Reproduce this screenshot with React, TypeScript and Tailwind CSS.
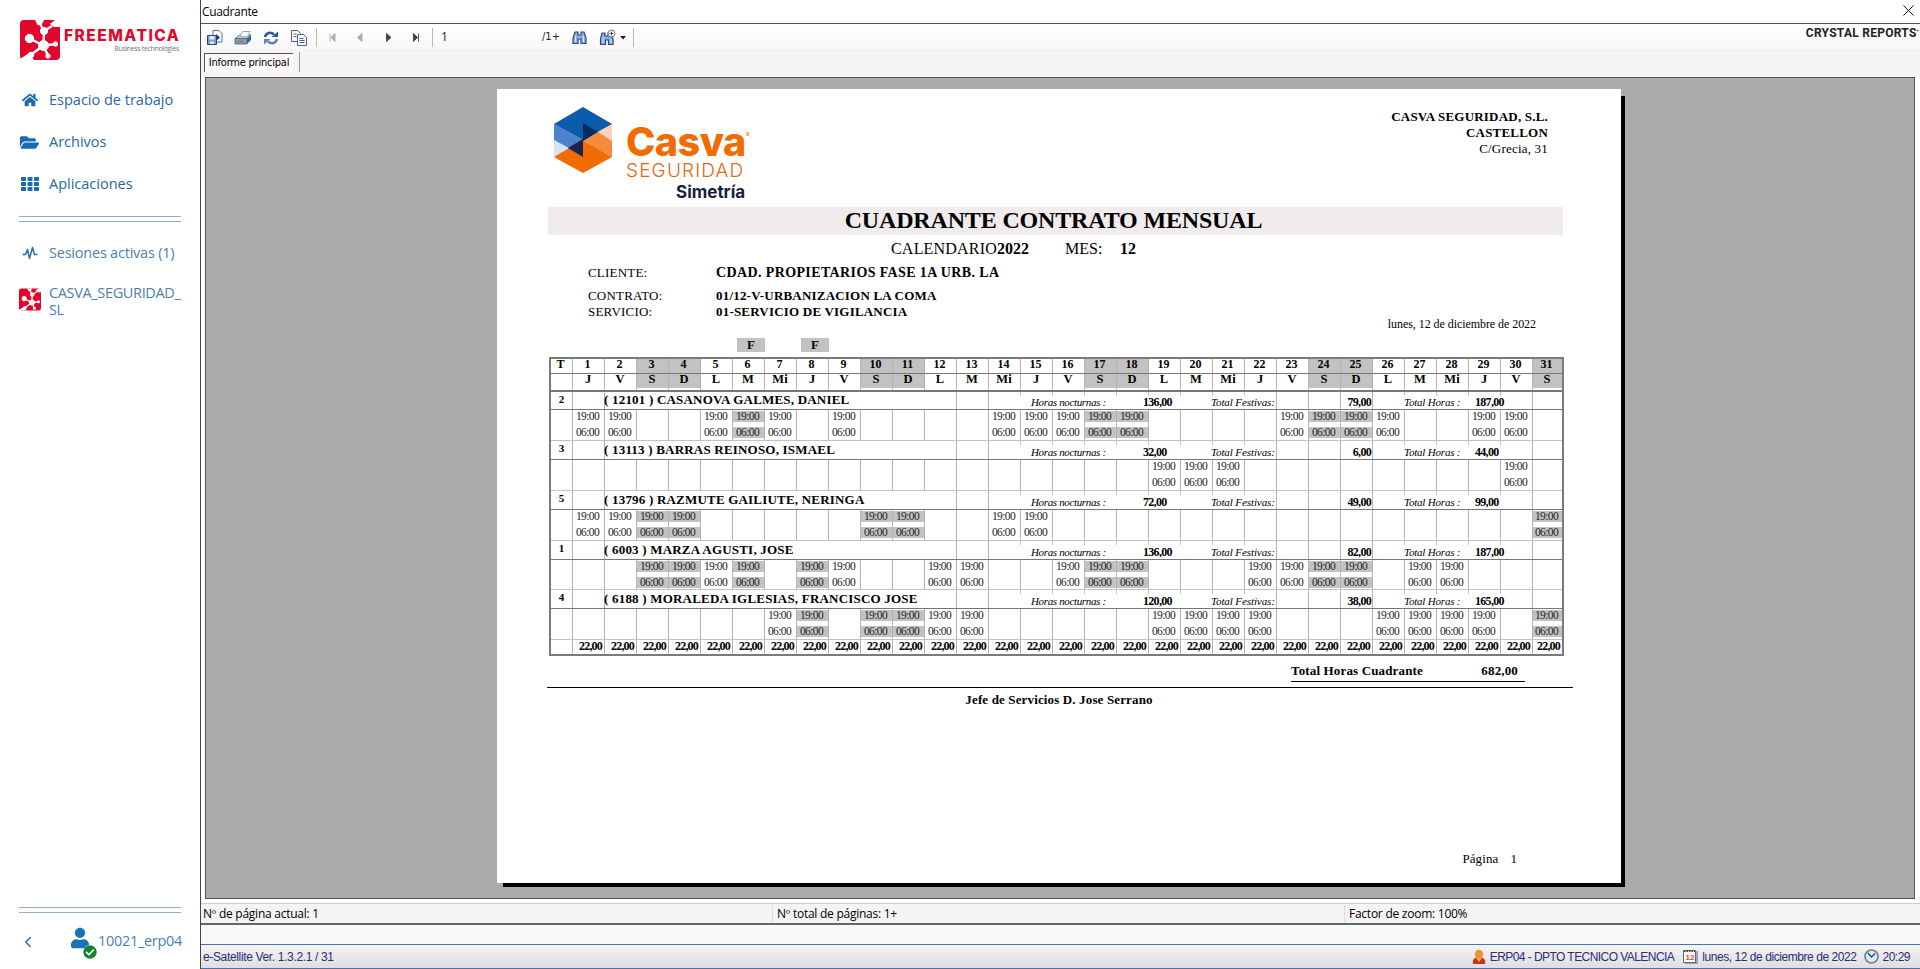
import React from "react";
import { FaHome, FaFolderOpen, FaUser, FaCheckCircle } from "react-icons/fa";
import { ChevronLeft } from "lucide-react";

const DAYS: string[] = ["J", "V", "S", "D", "L", "M", "Mi"];
const dayName = (d: number) => DAYS[(d - 1) % 7];
const WEEKEND = [3, 4, 10, 11, 17, 18, 24, 25, 31];
const HOLIDAYS = [6, 8];
const MONTH = Array.from({ length: 31 }, (_, i) => i + 1);
const isShaded = (d: number) => WEEKEND.includes(d) || HOLIDAYS.includes(d);

type Worker = {
  turn: string;
  name: string;
  night: string;
  festive: string;
  total: string;
  days: number[];
  head: string;
  body: string;
};

const WORKERS: Worker[] = [
  { turn: "2", name: "( 12101 ) CASANOVA GALMES, DANIEL", night: "136,00", festive: "79,00", total: "187,00", days: [1, 2, 5, 6, 7, 9, 14, 15, 16, 17, 18, 23, 24, 25, 26, 29, 30], head: "h-[18px]", body: "h-[31px]" },
  { turn: "3", name: "( 13113 ) BARRAS REINOSO, ISMAEL", night: "32,00", festive: "6,00", total: "44,00", days: [19, 20, 21, 30], head: "h-[19px]", body: "h-[31px]" },
  { turn: "5", name: "( 13796 ) RAZMUTE GAILIUTE, NERINGA", night: "72,00", festive: "49,00", total: "99,00", days: [1, 2, 3, 4, 10, 11, 14, 15, 31], head: "h-[19px]", body: "h-[31px]" },
  { turn: "1", name: "( 6003 ) MARZA AGUSTI, JOSE", night: "136,00", festive: "82,00", total: "187,00", days: [3, 4, 5, 6, 8, 9, 12, 13, 16, 17, 18, 22, 23, 24, 25, 27, 28], head: "h-[19px]", body: "h-[30px]" },
  { turn: "4", name: "( 6188 ) MORALEDA IGLESIAS, FRANCISCO JOSE", night: "120,00", festive: "38,00", total: "165,00", days: [7, 8, 10, 11, 12, 13, 19, 20, 21, 22, 26, 27, 28, 29, 31], head: "h-[19px]", body: "h-[31px]" },
];

const GRID = "grid grid-cols-[21px_repeat(30,32px)_30px]";

function FreematicaMark({ className }: { className: string }) {
  return (
    <svg viewBox="0 0 40 40" className={className}>
      <rect width="40" height="40" rx="4" fill="#e2062c" />
      <g fill="#fff" stroke="#fff">
        <circle cx="9.500" cy="18.500" r="4.200" />
        <circle cx="24" cy="11" r="3.600" />
        <circle cx="23.500" cy="25.500" r="5" />
        <circle cx="11" cy="35" r="2.800" />
        <circle cx="35.500" cy="24" r="2.200" />
        <circle cx="28" cy="36" r="2.200" />
        <path d="M9.500 18.500L23.500 25.500L24 11L19 2M24 11L32 6M23.500 25.500L12 34M23.500 25.500L37 24M23.500 25.500L28 36" strokeWidth="2.400" fill="none" />
        <path d="M15 0h9l-2.500 5h-4zM30 4l5-4h5v7h-6zM0 39l9-6 5 7H0z" strokeWidth="0" />
      </g>
    </svg>
  );
}

function AppsGrid() {
  return (
    <svg viewBox="0 0 18 14" className="h-[14px] w-[18px]" fill="#1a6cb0">
      {[0, 5, 10].map((y) => [0, 6.5, 13].map((x) => <rect key={`${x}-${y}`} x={x} y={y} width="5" height="4" rx="0.8" />))}
    </svg>
  );
}

function Sidebar() {
  return (
    <aside className="flex w-[200px] shrink-0 flex-col bg-white font-['Open_Sans',sans-serif] text-[#2768a4]">
      <div className="flex h-[60px] items-start pt-[20px] pl-[20px]">
        <FreematicaMark className="h-[40px] w-[40px]" />
        <div className="ml-[4px] flex w-[116px] flex-col pt-[8px] font-['Inter',sans-serif]">
          <span className="text-[15.5px] leading-[15px] font-extrabold tracking-[1.5px] text-[#e2062c]">FREEMATICA</span>
          <span className="mr-px self-end font-['Open_Sans',sans-serif] text-[7px] leading-[11px] tracking-[-0.35px] text-[#777]">Business technologies</span>
        </div>
      </div>
      <nav className="mt-[19px] flex flex-col text-[14.5px]">
        <div className="flex h-[42px] items-center gap-[11px] pl-[22px]"><FaHome className="h-[16px] w-[16px] text-[#1a6cb0]" /><span>Espacio de trabajo</span></div>
        <div className="flex h-[42px] items-center gap-[10px] pl-[20px]"><FaFolderOpen className="h-[19px] w-[19px] text-[#1a6cb0]" /><span>Archivos</span></div>
        <div className="flex h-[42px] items-center gap-[10px] pl-[21px]"><AppsGrid /><span>Aplicaciones</span></div>
      </nav>
      <div className="mt-[11px] ml-[19px] h-[6px] w-[162px] border-y border-[#8fb0c4]" />
      <div className="mt-[20px] flex h-[22px] items-center gap-[11px] pl-[22px] text-[14.5px] text-[#4b7fb0]">
        <svg viewBox="0 0 16 16" className="h-[16px] w-[16px]" fill="none" stroke="#2a70ad" strokeWidth="1.500" strokeLinejoin="round">
          <path d="M0.500 9.500h3l2-5 2 9 3-11 2 7h3" />
        </svg>
        <span className="tracking-[-0.22px]">Sesiones activas (1)</span>
      </div>
      <div className="mt-[20px] flex gap-[8px] pl-[19px] text-[#4b7fb0]">
        <FreematicaMark className="mt-[4px] h-[23px] w-[22px]" />
        <span className="text-[14.5px] leading-[17px] tracking-[-0.35px]">CASVA_SEGURIDAD_<br />SL</span>
      </div>
      <div className="mt-auto ml-[19px] h-[6px] w-[162px] border-y border-[#8fb0c4]" />
      <div className="mb-[8px] flex h-[48px] items-end pb-[6px] pl-[19px]">
        <ChevronLeft className="mb-[4px] h-[18px] w-[18px] text-[#2a70ad]" />
        <span className="relative ml-[34px] block h-[28px] w-[26px]">
          <FaUser className="h-[22px] w-[18px] text-[#1a73b8]" />
          <FaCheckCircle className="absolute right-0 bottom-[-4px] h-[14px] w-[14px] rounded-full bg-white text-[#12862c]" />
        </span>
        <span className="mb-[3px] ml-px text-[14.5px] tracking-[-0.3px] text-[#4b7fb0]">10021_erp04</span>
      </div>
    </aside>
  );
}

function Toolbar() {
  return (
    <div className="flex h-[25px] items-center bg-gradient-to-b from-white to-[#f9f7f8] pt-[2px] font-['Open_Sans',sans-serif] text-[12px] text-[#222]">
      <svg width="18" height="18" viewBox="0 0 18 18" className="ml-[5px]">
        <path d="M7 1.500h6l3 3V13H7z" fill="#fff" stroke="#4f6f9f" />
        <path d="M1.500 6.500h9v9h-9z" fill="#7d9acb" stroke="#2c4776" />
        <path d="M3.500 7h5v3.500h-5zM4 12.500h4V15H4z" fill="#e6edf7" />
        <path d="M10 5l4 3.500-4 3.500z" fill="#1c3e77" />
      </svg>
      <svg width="18" height="18" viewBox="0 0 18 18" className="ml-[10px]">
        <path d="M1 9.500L5.500 6H17l-4 3.500z" fill="#b9d3d6" stroke="#4c6d9a" strokeWidth="0.800" />
        <path d="M6 7l2.500-4.500H16L13 8z" fill="#fff" stroke="#7d96bd" strokeWidth="0.800" />
        <path d="M1 9.500h12V15H1z" fill="#7fa0b8" stroke="#40638f" strokeWidth="0.800" />
        <path d="M13 9.500L17 6v5l-4 4z" fill="#3f6390" />
        <path d="M3 12.500h7" stroke="#e9553d" strokeWidth="1.500" />
      </svg>
      <svg width="18" height="18" viewBox="0 0 18 18" className="ml-[10px]" fill="none">
        <path d="M3 8C4 3.500 9 2.500 12 5.500" stroke="#33559b" strokeWidth="2.600" />
        <path d="M9.500 8H16V2.500z" fill="#33559b" />
        <path d="M15 10C14 14.500 9 15.500 6 12.500" stroke="#5f82bd" strokeWidth="2.600" />
        <path d="M8.500 10H2v5.500z" fill="#5f82bd" />
      </svg>
      <svg width="18" height="18" viewBox="0 0 18 18" className="ml-[10px]" stroke="#446394" fill="#fff">
        <path d="M1.500 1.500h6l3 3v8h-9z" />
        <path d="M7.500 5.500h6l3 3v8h-9z" />
        <path d="M3.500 5h3M3.500 7.500h3M9.500 9.500h4M9.500 11.500h5M9.500 13.500h5" />
      </svg>
      <i className="ml-[8px] h-[19px] w-px bg-[#b8b8b8]" />
      <svg width="96" height="11" viewBox="0 0 96 11" className="ml-[11px]">
        <path d="M2 1.500v8M7 1.500v8L3 5.500zM34 1.500v8L29.500 5.500z" fill="#aaa" stroke="#aaa" strokeWidth="0.900" />
        <path d="M58.500 1.500v8l4.500-4zM85.500 1.500v8l4-4zM90.500 1.500v8" fill="#444" stroke="#444" strokeWidth="0.900" />
      </svg>
      <i className="ml-[8px] h-[19px] w-px bg-[#b8b8b8]" />
      <span className="ml-[8px] w-[101px] -mt-px">1</span>
      <span className="w-[30px] font-['DejaVu_Sans_Condensed','DejaVu_Sans',sans-serif] text-[11px]">/1+</span>
      <svg width="15" height="15" viewBox="0 0 15 15">
        <path d="M3 2h3v3h3V2h3l2 6v5.500H9V9H6v4.500H1V8z" fill="#8faedb" stroke="#234a86" strokeWidth="1.200" />
        <path d="M3.500 6v6M11.500 6v6" stroke="#dbe7f7" />
      </svg>
      <svg width="18" height="17" viewBox="0 0 18 17" className="ml-[12px]">
        <path d="M3 4h3v3h3V4h2l3 6v5.500H9.500V11h-3v4.500H1.500V10z" fill="#8faedb" stroke="#234a86" strokeWidth="1.200" />
        <path d="M4 8v6M12 10v4" stroke="#dbe7f7" />
        <circle cx="12.500" cy="4.500" r="3.500" fill="#fff" stroke="#555" strokeWidth="0.800" />
        <path d="M12.500 2.500v4M10.500 4.500h4" stroke="#345" strokeWidth="0.900" />
      </svg>
      <svg width="6" height="4" viewBox="0 0 6 4" className="ml-[3px]"><path d="M0 0h6L3 3.500z" fill="#222" /></svg>
      <i className="ml-[7px] h-[19px] w-px bg-[#b8b8b8]" />
      <span className="mt-[-9px] mr-px ml-auto font-['Roboto',sans-serif] text-[12px] leading-[14px] font-bold tracking-[0.26px] text-[#222]">CRYSTAL REPORTS<span className="align-[4px] text-[6px] leading-[6px]">•</span></span>
    </div>
  );
}

function CasvaLogo() {
  return (
    <div className="flex h-[105px] pt-[18px] pl-[57px] font-['Inter',sans-serif]">
      <svg width="58" height="66" viewBox="0 0 58 66">
        <path d="M0 17v33l29 16 29-16V17L29 0z" fill="#fbd3b8" />
        <path d="M0 17L29 0l29 17-29 16z" fill="#0b5cab" />
        <path d="M0 17l29 16v2L14 42 0 33z" fill="#4b84cc" />
        <path d="M0 33l15 8L0 50z" fill="#d5e1f5" />
        <path d="M0 50l29-17 29 17-29 16z" fill="#f06c00" />
        <path d="M29 34l15-9 14 9v16z" fill="#f58b3c" />
        <path d="M29 34V16l15 9z" fill="#082a63" />
        <path d="M29 32v18l-15-9z" fill="#1b2450" />
      </svg>
      <div className="ml-[14px] flex w-[132px] flex-col pt-[15px]">
        <div className="flex">
          <span className="text-[39.5px] leading-[40px] font-extrabold tracking-[-0.5px] text-[#f06c00]">Casva</span>
          <span className="mt-[10px] text-[6px] leading-[6px] text-[#f06c00]">®</span>
        </div>
        <span className="text-[19px] leading-[18px] font-light tracking-[1.15px] text-[#e06a14]">SEGURIDAD</span>
        <span className="pl-[50px] text-[17px] leading-[25px] font-bold tracking-[0px] text-[#17203f]">Simetría</span>
      </div>
    </div>
  );
}

function WorkerHeader({ w }: { w: Worker }) {
  return (
    <div className={`grid border-b border-[#777] ${w.head}`}>
      <div className={`[grid-area:1/1] ${GRID}`}>
        <span className="text-center text-[11px] leading-[15px] font-bold">{w.turn}</span>
        {MONTH.map((d) => {
          const underName = d > 2 && d <= 12;
          const short = (d >= 15 && d <= 22) || (d >= 27 && d <= 30);
          return <i key={d} className={underName ? "" : short ? "h-[4px] border-l border-[#c4c4c4]" : "border-l border-[#b4b4b4]"} />;
        })}
      </div>
      <div className="flex items-end pl-[53px] text-[12px] leading-[14px] [grid-area:1/1]">
        <span className="mb-[2px] w-[427px] text-[13px] font-bold tracking-[0.2px] whitespace-pre">{w.name}</span>
        <span className="w-[112px] text-[11px] tracking-[-0.35px] italic">Horas nocturnas :</span>
        <span className="w-[68px] font-bold tracking-[-0.7px]">{w.night}</span>
        <span className="w-[100px] text-[11px] tracking-[-0.1px] italic">Total Festivas:</span>
        <span className="w-[60px] text-right font-bold tracking-[-0.7px]">{w.festive}</span>
        <span className="ml-[33px] w-[71px] text-[11px] tracking-[-0.2px] italic">Total Horas :</span>
        <span className="font-bold tracking-[-0.7px]">{w.total}</span>
      </div>
    </div>
  );
}

function WorkerBody({ w }: { w: Worker }) {
  return (
    <div className={`${GRID} border-b border-[#c2c2c2] ${w.body}`}>
      <span />
      {MONTH.map((d) => {
        const on = w.days.includes(d);
        const bg = on && isShaded(d) ? "bg-[#c3c2c2]" : "";
        return (
          <div key={d} className="flex flex-col gap-[5px] border-l border-[#b4b4b4] pt-px text-center text-[11.5px] tracking-[-0.6px] text-[#222]">
            {on && <span className={`block h-[11px] pr-[2px] leading-[10px] ${bg}`}>19:00</span>}
            {on && <span className={`block h-[11px] pr-[2px] leading-[10px] ${bg}`}>06:00</span>}
          </div>
        );
      })}
    </div>
  );
}

function Schedule() {
  return (
    <div className="ml-[52px] flex w-[1015px] flex-col border-2 border-[#7d7a7c] text-black">
      <div className={`${GRID} h-[15px] border-b border-[#777] text-center text-[12px] leading-[10px] font-bold`}>
        <span className="pr-[2px]">T</span>
        {MONTH.map((d) => <span key={d} className={`border-l border-[#b4b4b4] pr-[2px] ${WEEKEND.includes(d) ? "bg-[#c3c2c2]" : ""}`}>{d}</span>)}
      </div>
      <div className={`${GRID} h-[18px] border-b-2 border-[#777] text-center text-[12.5px] leading-[11px] font-bold`}>
        <span />
        {MONTH.map((d) => (
          <span key={d} className="border-l border-[#b4b4b4]">
            <span className={`block h-[14px] pr-px ${WEEKEND.includes(d) ? "bg-[#c3c2c2]" : ""}`}>{dayName(d)}</span>
          </span>
        ))}
      </div>
      {WORKERS.map((w) => <React.Fragment key={w.turn}><WorkerHeader w={w} /><WorkerBody w={w} /></React.Fragment>)}
      <div className={`${GRID} h-[14px] text-right text-[12px] leading-[12px] font-bold tracking-[-0.8px]`}>
        <span />
        {MONTH.map((d) => <span key={d} className="border-l border-[#b4b4b4] pr-[2px]">22,00</span>)}
      </div>
    </div>
  );
}

function ReportPage() {
  return (
    <div className="mt-[11px] ml-[291px] grid h-[798px] w-[1128px] grid-cols-[1124px_4px] grid-rows-[7px_787px_4px]">
      <article className="col-start-1 row-span-2 row-start-1 flex flex-col bg-white font-['Liberation_Serif',serif] text-black">
        <div className="flex h-[118px] justify-between">
          <CasvaLogo />
          <div className="flex flex-col items-end pt-[20px] pr-[73px] text-[13px] leading-[16px] tracking-[0.2px]">
            <b>CASVA SEGURIDAD, S.L.</b><b>CASTELLON</b><span>C/Grecia, 31</span>
          </div>
        </div>
        <h1 className="ml-[51px] flex h-[28px] w-[1015px] items-center justify-center bg-[#f0ebed] pr-[4px] pb-[3px] text-[24px] font-bold tracking-[-0.16px]">CUADRANTE CONTRATO MENSUAL</h1>
        <div className="flex h-[28px] items-center pl-[394px] text-[16px]">
          <span className="w-[106px] tracking-[0.2px]">CALENDARIO</span><b className="w-[68px]">2022</b><span className="w-[55px]">MES:</span><b>12</b>
        </div>
        <div className="grid grid-cols-[128px_1fr] grid-rows-[16px_7px_16px_16px] pt-[2px] pl-[91px] text-[13px] leading-[16px] tracking-[0.2px]">
          <span>CLIENTE:</span><b className="text-[14px] tracking-[0.38px]">CDAD. PROPIETARIOS FASE 1A URB. LA</b>
          <i /><i />
          <span>CONTRATO:</span><b>01/12-V-URBANIZACION LA COMA</b>
          <span>SERVICIO:</span><b>01-SERVICIO DE VIGILANCIA</b>
        </div>
        <div className="-mt-[3px] flex h-[14px] items-center justify-end pr-[85px] text-[12px] tracking-[-0.06px]">lunes, 12 de diciembre de 2022</div>
        <div className="mt-[7px] flex h-[14px] gap-[36px] pl-[240px] text-center text-[13px] leading-[13px] font-bold">
          <span className="w-[28px] bg-[#c3c2c2]">F</span><span className="w-[28px] bg-[#c3c2c2]">F</span>
        </div>
        <div className="mt-[5px]"><Schedule /></div>
        <div className="mt-[5px] ml-[794px] flex h-[21px] w-[234px] justify-between border-b border-black pr-[7px] text-[13px] leading-[19px] font-bold tracking-[0.15px]">
          <span>Total Horas Cuadrante</span><span>682,00</span>
        </div>
        <div className="mt-[5px] ml-[50px] h-px w-[1026px] bg-black" />
        <div className="mt-[3px] text-center text-[13px] leading-[18px] font-bold tracking-[0.14px]">Jefe de Servicios D. Jose Serrano</div>
        <div className="mt-auto mb-[15px] flex justify-end gap-[12px] pr-[104px] text-[13px] leading-[18px] tracking-[0.1px]"><span>Página</span><span>1</span></div>
      </article>
      <div className="col-start-2 row-span-2 row-start-2 bg-black" />
      <div className="col-start-1 row-start-3 ml-[6px] bg-black" />
    </div>
  );
}

function FooterBar() {
  return (
    <footer className="flex h-[25px] items-center border-y border-[#4a72b0] bg-gradient-to-b from-[#f5f3f4] to-[#dedde0] px-[2px] font-['Liberation_Sans',sans-serif] text-[12px] text-[#2b2c78]">
      <span className="tracking-[-0.35px]">e-Satellite Ver. 1.3.2.1 / 31</span>
      <svg width="14" height="16" viewBox="0 0 14 16" className="ml-auto">
        <path d="M1 15c-1-5 2-7 6-7s7 2 6 7z" fill="#c8321a" /><circle cx="7" cy="5" r="4.200" fill="#e9952a" /><path d="M4 9l3 4 3-4z" fill="#f3b04e" />
      </svg>
      <span className="ml-[4px] tracking-[-0.56px]">ERP04 - DPTO TECNICO VALENCIA</span>
      <svg width="16" height="16" viewBox="0 0 16 16" className="ml-[9px]">
        <path d="M2 2h13v13H2z" fill="#8fa6c8" /><path d="M.5 1.500h12v12H.5z" fill="#fff" stroke="#667" /><path d="M1 2h11" stroke="#445" strokeWidth="2" strokeDasharray="1.500 1" /><text x="2.500" y="11" fontSize="8" fontWeight="bold" fill="#d8492a">12</text>
      </svg>
      <span className="ml-[3px] tracking-[-0.44px]">lunes, 12 de diciembre de 2022</span>
      <svg width="15" height="15" viewBox="0 0 15 15" className="ml-[8px]">
        <circle cx="7.500" cy="7.500" r="6.500" fill="#d9ecf6" stroke="#6c7f92" strokeWidth="1.600" /><path d="M4 4l3.500 4L11 4.500" fill="none" stroke="#24425e" strokeWidth="1.300" />
      </svg>
      <span className="mr-[8px] ml-[3px] tracking-[-0.5px]">20:29</span>
    </footer>
  );
}

export default function App() {
  return (
    <div className="flex h-[969px] w-[1920px] overflow-hidden bg-white">
      <Sidebar />
      <main className="flex min-w-0 flex-1 flex-col border-l border-[#444]">
        <header className="flex h-[24px] items-center justify-between border-b border-[#555] bg-white pr-[6px] pb-[2px] pl-[1px] font-['Open_Sans',sans-serif] text-[12px] text-black">
          <span className="pt-[2px] tracking-[-0.35px]">Cuadrante</span>
          <svg width="11" height="11" viewBox="0 0 11 11"><path d="M.5.5l10 10M10.500.5l-10 10" stroke="#111" /></svg>
        </header>
        <Toolbar />
        <div className="flex h-[28px] bg-[#f6f3f4] font-['DejaVu_Sans_Condensed','DejaVu_Sans',sans-serif] text-[11px] text-black">
          <div className="mt-[4px] ml-[3px] flex h-[19px] w-[89px] items-center justify-center border-t border-l border-[#555] bg-[#faf8f9] pt-px tracking-[-0.22px] whitespace-nowrap">Informe principal</div>
          <i className="mt-[3px] ml-[6px] h-[20px] w-px bg-[#999]" />
        </div>
        <section className="mr-[5px] ml-[4px] h-[822px] border border-[#555] bg-[#ababab]"><ReportPage /></section>
        <div className="mt-[4px] grid h-[22px] grid-cols-[571px_572px_1fr] items-center border-t border-b-2 border-t-[#ccc] border-b-[#666] bg-[#f6f3f4] pb-px font-['Open_Sans',sans-serif] text-[12px] leading-[17px] tracking-[-0.25px] text-black">
          <span className="pl-[2px]">Nº de página actual: 1</span>
          <span className="border-l border-[#ddd] pl-[4px]">Nº total de páginas: 1+</span>
          <span className="border-l border-[#ddd] pl-[4px]">Factor de zoom: 100%</span>
        </div>
        <div className="flex-1 bg-[#f8f9fb]" />
        <FooterBar />
      </main>
    </div>
  );
}
